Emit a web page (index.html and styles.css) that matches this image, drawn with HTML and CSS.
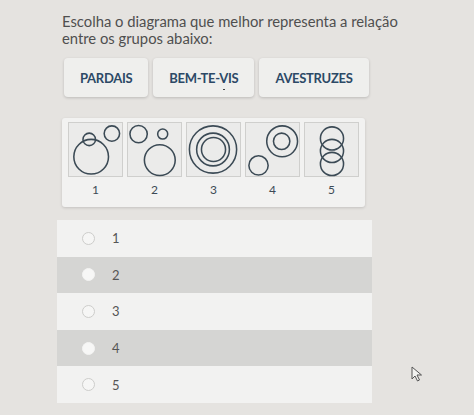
FILE: index.html
```html
<!DOCTYPE html>
<html lang="pt">
<head>
<meta charset="utf-8">
<link rel="stylesheet" href="styles.css">
</head>
<body>
<main class="page">
  <p class="question">Escolha o diagrama que melhor representa a relação<br>entre os grupos abaixo:</p>
  <div class="groups">
    <div class="group">PARDAIS</div>
    <div class="group">BEM-TE-VIS<span class="tick"></span></div>
    <div class="group">AVESTRUZES</div>
  </div>
  <div class="diagrams">
    <div class="diagram">
      <svg class="panel" viewBox="0 0 55 55"><circle cx="23" cy="35" r="18"/><circle cx="21" cy="17" r="6.5"/><circle cx="44.5" cy="11" r="8"/></svg>
      <span class="label">1</span>
    </div>
    <div class="diagram">
      <svg class="panel" viewBox="0 0 55 55"><circle cx="11" cy="11.5" r="9"/><circle cx="36" cy="11.5" r="5.2"/><circle cx="33" cy="38.5" r="16"/></svg>
      <span class="label">2</span>
    </div>
    <div class="diagram">
      <svg class="panel" viewBox="0 0 55 55"><circle cx="27" cy="27.5" r="24.5"/><circle cx="27" cy="27.5" r="17"/><circle cx="27.5" cy="27.5" r="12.5"/></svg>
      <span class="label">3</span>
    </div>
    <div class="diagram">
      <svg class="panel" viewBox="0 0 55 55"><circle cx="37.5" cy="19" r="16"/><circle cx="37" cy="19" r="8.5"/><circle cx="13" cy="44" r="10"/></svg>
      <span class="label">4</span>
    </div>
    <div class="diagram">
      <svg class="panel" viewBox="0 0 55 55"><circle cx="28" cy="16" r="12"/><circle cx="28" cy="29" r="12"/><circle cx="28" cy="42.5" r="12"/></svg>
      <span class="label">5</span>
    </div>
  </div>
  <ul class="options">
    <li class="option"><span class="radio"></span><span class="num">1</span></li>
    <li class="option alt"><span class="radio"></span><span class="num">2</span></li>
    <li class="option"><span class="radio"></span><span class="num">3</span></li>
    <li class="option alt"><span class="radio"></span><span class="num">4</span></li>
    <li class="option"><span class="radio"></span><span class="num">5</span></li>
  </ul>
  <svg class="cursor" viewBox="0 0 12 16"><path d="M1 1 L1 13 L4 10 L6.5 15 L8.5 14 L6 9 L10.5 9 Z"/></svg>
</main>
</body>
</html>
```

FILE: styles.css
```css
html, body {
  margin: 0;
  padding: 0;
}
body {
  background: #e5e3e0;
  font-family: Lato, "Liberation Sans", sans-serif;
  width: 474px;
  height: 415px;
  overflow: hidden;
}
.page {
  position: relative;
  padding: 13px 0 0 0;
  height: 402px;
}
.question {
  margin: 0 0 0 62px;
  font-size: 14.8px;
  line-height: 17px;
  color: #4f4f4f;
}
.groups {
  display: flex;
  gap: 5px;
  margin: 11px 0 0 64px;
}
.group {
  position: relative;
  height: 39px;
  padding: 0 16px;
  display: flex;
  align-items: center;
  background: #efefed;
  border-radius: 4px;
  box-shadow: 0 1px 3px rgba(0,0,0,0.18);
  font-size: 13px;
  letter-spacing: -0.3px;
  font-weight: 700;
  color: #2c4966;
}
.tick {
  position: absolute;
  left: 70px;
  top: 31px;
  width: 2px;
  height: 1px;
  background: #444;
}
.diagrams {
  display: flex;
  gap: 4px;
  width: 291px;
  margin: 21px 0 0 62px;
  padding: 4px 6px 0 6px;
  height: 85px;
  background: #f2f2f1;
  border-radius: 3px;
  box-shadow: 0 1px 3px rgba(0,0,0,0.15);
}
.diagram {
  display: flex;
  flex-direction: column;
  align-items: center;
}
.panel {
  width: 55px;
  height: 55px;
  box-sizing: border-box;
  background: #ebebea;
  border: 1px solid #cfcfcd;
  fill: none;
  stroke: #3b4a55;
  stroke-width: 1.6;
  overflow: visible;
}
.label {
  margin-top: 6px;
  font-size: 12px;
  line-height: 14px;
  color: #3d4a56;
}
.options {
  list-style: none;
  margin: 13px 0 0 57px;
  padding: 0;
  width: 315px;
}
.option {
  display: flex;
  align-items: center;
  height: 36.6px;
  background: #f2f2f1;
}
.option.alt {
  background: #d5d5d3;
}
.radio {
  width: 11px;
  height: 11px;
  margin-left: 25px;
  border-radius: 50%;
  border: 1px solid #cdcdcb;
  background: #f6f6f5;
}
.alt .radio {
  border-color: #f4f4f3;
  background: #f7f7f6;
}
.num {
  margin-left: 17px;
  font-size: 13px;
  color: #555;
}
.cursor {
  position: absolute;
  left: 411px;
  top: 366px;
  width: 12px;
  height: 16px;
  fill: #f2f2f0;
  stroke: #555;
  stroke-width: 1;
}
```
